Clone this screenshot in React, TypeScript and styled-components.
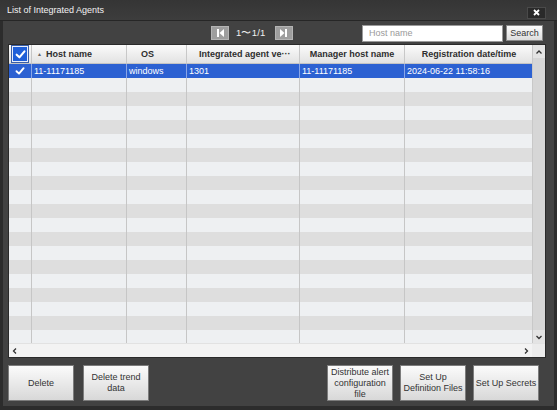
import React from "react";
import styled, { createGlobalStyle } from "styled-components";

const Global = createGlobalStyle`
  html, body { margin: 0; padding: 0; background: #2a2a2a; }
  * { box-sizing: border-box; }
  body { font-family: "Liberation Sans", Arial, sans-serif; }
`;

const Window = styled.div`
  width: 557px;
  height: 410px;
  background: #2c2c2c;
  display: flex;
  flex-direction: column;
  font-size: 9px;
`;

const TitleBar = styled.div`
  height: 21px;
  flex: none;
  display: flex;
  align-items: center;
  justify-content: space-between;
  padding: 0 11px 0 7px;
  background: linear-gradient(#353535, #3d3d3d);
  border-bottom: 1px solid #262626;
  color: #f2f2f2;
`;

const CloseBtn = styled.div`
  width: 19px;
  height: 12px;
  margin-top: 5px;
  background: #2a2a2a;
  border: 1px solid #4a4a4a;
  display: flex;
  align-items: center;
  justify-content: center;
`;

const Body = styled.div`
  flex: 1;
  margin: 0 3px 4px 3px;
  background: #424242;
  display: flex;
  flex-direction: column;
  padding: 0 8px 0 5px;
`;

const Toolbar = styled.div`
  height: 23px;
  flex: none;
  display: flex;
  align-items: center;
`;

const Pager = styled.div`
  display: flex;
  align-items: center;
  margin-left: 203px;
  margin-top: 1px;
  color: #f0f0f0;
`;

const PageBtn = styled.div`
  width: 18px;
  height: 14px;
  background: #9e9e9e;
  border: 1px solid #b4b4b4;
  display: flex;
  align-items: center;
  justify-content: center;
`;

const PageText = styled.span`
  margin: 0 9px 0 7px;
  font-size: 9.5px;
  letter-spacing: 0.2px;
`;

const Spacer = styled.div`
  flex: 1;
`;

const SearchInput = styled.div`
  width: 141px;
  height: 17px;
  margin-top: 1px;
  background: #fff;
  border: 1px solid #9a9a9a;
  color: #9a9a9a;
  padding-left: 6px;
  display: flex;
  align-items: center;
`;

const SmallBtn = styled.div`
  width: 37px;
  height: 16px;
  margin: 0 3px 0 3px;
  background: linear-gradient(#fdfdfd, #dcdcdc);
  border: 1px solid #8a8a8a;
  color: #333;
  display: flex;
  align-items: center;
  justify-content: center;
`;

const Table = styled.div`
  height: 314px;
  flex: none;
  border: 1px solid #2a2a2a;
  background: #f0f0f0;
  display: flex;
  flex-direction: column;
`;

const TableMain = styled.div`
  flex: 1;
  display: flex;
  overflow: hidden;
`;

const Grid = styled.div`
  flex: 1;
  display: flex;
  flex-direction: column;
  overflow: hidden;
`;

const HeaderRow = styled.div`
  height: 19px;
  flex: none;
  display: flex;
  background: linear-gradient(#fbfbfb, #e2e2e2);
  border-bottom: 1px solid #c4c4c4;
`;

const HeadCell = styled.div<{ $w: number; $align: string; $pad: number }>`
  width: ${(p) => p.$w}px;
  flex: none;
  display: flex;
  align-items: center;
  justify-content: ${(p) => p.$align};
  padding-left: ${(p) => p.$pad}px;
  padding-right: 2px;
  border-right: 1px solid #c8c8c8;
  font-weight: bold;
  color: #2e2e2e;
  white-space: nowrap;
  overflow: hidden;
`;

const SortMark = styled.span`
  font-size: 5px;
  color: #666;
  margin-right: 4px;
`;

const Row = styled.div<{ $bg: string }>`
  height: 14px;
  flex: none;
  display: flex;
  background: ${(p) => p.$bg};
`;

const Cell = styled.div<{ $w: number; $sel: boolean }>`
  width: ${(p) => p.$w}px;
  flex: none;
  display: flex;
  align-items: center;
  padding-left: 2px;
  border-right: 1px solid ${(p) => (p.$sel ? "#8aa6e6" : "#c6c6c6")};
  color: ${(p) => (p.$sel ? "#ffffff" : "#222")};
  white-space: nowrap;
  overflow: hidden;
`;

const CheckCell = styled.div<{ $w: number; $sel: boolean }>`
  width: ${(p) => p.$w}px;
  flex: none;
  display: flex;
  align-items: center;
  justify-content: center;
  border-right: 1px solid ${(p) => (p.$sel ? "#8aa6e6" : "#c6c6c6")};
`;

const HeadCheck = styled.div`
  width: 16px;
  height: 16px;
  background: #1f5fd8;
  border: 1px solid #e8eefc;
  outline: 1px solid #3a5fa8;
  display: flex;
  align-items: center;
  justify-content: center;
`;

const VScroll = styled.div`
  width: 13px;
  flex: none;
  display: flex;
  flex-direction: column;
  background: #d6d6d6;
  border-left: 1px solid #c8c8c8;
`;

const ArrowBox = styled.div`
  height: 13px;
  flex: none;
  display: flex;
  align-items: center;
  justify-content: center;
  background: #e4e4e4;
`;

const HScroll = styled.div`
  height: 14px;
  flex: none;
  display: flex;
  align-items: center;
  background: #f3f3f3;
  border-top: 1px solid #e2e2e2;
`;

const HArrow = styled.div`
  width: 12px;
  height: 13px;
  flex: none;
  display: flex;
  align-items: center;
  justify-content: center;
`;

const Corner = styled.div`
  width: 13px;
  height: 13px;
  flex: none;
  background: #ececec;
`;

const Footer = styled.div`
  flex: 1;
  display: flex;
  align-items: flex-start;
  padding-top: 7px;
  padding-right: 7px;
  gap: 9px;
`;

const ActionBtn = styled.div`
  width: 66px;
  height: 36px;
  flex: none;
  background: linear-gradient(#fbfbfb, #e6e6e6 60%, #d8d8d8);
  border: 1px solid #7c7c7c;
  color: #333;
  display: flex;
  align-items: center;
  justify-content: center;
  text-align: center;
  line-height: 11px;
  padding: 0;
  white-space: nowrap;
`;

const RightGroup = styled.div`
  margin-left: auto;
  display: flex;
  gap: 7px;
`;

const cols = [
  { w: 23 },
  { w: 95, label: "Host name", align: "flex-start", pad: 5, sort: true },
  { w: 60, label: "OS", align: "flex-start", pad: 14 },
  { w: 113, label: "Integrated agent ve\u00b7\u00b7\u00b7", align: "flex-start", pad: 12 },
  { w: 105, label: "Manager host name", align: "center", pad: 2 },
  { w: 129, label: "Registration date/time", align: "center", pad: 2 },
];

const dataRow = ["11-11171185", "windows", "1301", "11-11171185", "2024-06-22 11:58:16"];

const Check = ({ size = 10 }: { size?: number }) => (
  <svg width={size} height={size} viewBox="0 0 10 10">
    <path d="M1.5 5.2 L4 7.6 L8.6 2.2" fill="none" stroke="#fff" strokeWidth="1.9" strokeLinecap="round" strokeLinejoin="round" />
  </svg>
);

const FirstIcon = () => (
  <svg width="9" height="10" viewBox="0 0 9 10">
    <rect x="1" y="1" width="2" height="8" fill="#fff" />
    <path d="M8 1 L3.5 5 L8 9 Z" fill="#fff" />
  </svg>
);

const LastIcon = () => (
  <svg width="9" height="10" viewBox="0 0 9 10">
    <rect x="6" y="1" width="2" height="8" fill="#fff" />
    <path d="M1 1 L5.5 5 L1 9 Z" fill="#fff" />
  </svg>
);

const Chevron = ({ dir }: { dir: "up" | "down" | "left" | "right" }) => {
  const d = {
    up: "M1.5 5.5 L4 3 L6.5 5.5",
    down: "M1.5 3 L4 5.5 L6.5 3",
    left: "M5 1.5 L2.5 4 L5 6.5",
    right: "M3 1.5 L5.5 4 L3 6.5",
  }[dir];
  return (
    <svg width="8" height="8" viewBox="0 0 8 8">
      <path d={d} fill="none" stroke="#333" strokeWidth="1.3" />
    </svg>
  );
};

export default function App() {
  const rows = Array.from({ length: 20 }, (_, i) => i);
  return (
    <>
      <Global />
      <Window>
        <TitleBar>
          <span>List of Integrated Agents</span>
          <CloseBtn>
            <svg width="7" height="7" viewBox="0 0 7 7">
              <path d="M1 1 L6 6 M6 1 L1 6" stroke="#fff" strokeWidth="1.8" />
            </svg>
          </CloseBtn>
        </TitleBar>
        <Body>
          <Toolbar>
            <Pager>
              <PageBtn>
                <FirstIcon />
              </PageBtn>
              <PageText>1〜1/1</PageText>
              <PageBtn>
                <LastIcon />
              </PageBtn>
            </Pager>
            <Spacer />
            <SearchInput>Host name</SearchInput>
            <SmallBtn>Search</SmallBtn>
          </Toolbar>
          <Table>
            <TableMain>
              <Grid>
                <HeaderRow>
                  <CheckCell $w={cols[0].w} $sel={false}>
                    <HeadCheck>
                      <Check size={11} />
                    </HeadCheck>
                  </CheckCell>
                  {cols.slice(1).map((c) => (
                    <HeadCell key={c.label} $w={c.w} $align={c.align!} $pad={c.pad!}>
                      {c.sort && <SortMark>▲</SortMark>}
                      {c.label}
                    </HeadCell>
                  ))}
                </HeaderRow>
                {rows.map((i) => {
                  const sel = i === 0;
                  const bg = sel ? "#2c61d2" : i % 2 === 1 ? "#eef0f2" : "#dedede";
                  return (
                    <Row key={i} $bg={bg}>
                      <CheckCell $w={cols[0].w} $sel={sel}>
                        {sel && <Check size={10} />}
                      </CheckCell>
                      {cols.slice(1).map((c, j) => (
                        <Cell key={j} $w={c.w} $sel={sel}>
                          {sel ? dataRow[j] : ""}
                        </Cell>
                      ))}
                    </Row>
                  );
                })}
              </Grid>
              <VScroll>
                <ArrowBox>
                  <Chevron dir="up" />
                </ArrowBox>
                <Spacer />
                <ArrowBox>
                  <Chevron dir="down" />
                </ArrowBox>
              </VScroll>
            </TableMain>
            <HScroll>
              <HArrow>
                <Chevron dir="left" />
              </HArrow>
              <Spacer />
              <HArrow>
                <Chevron dir="right" />
              </HArrow>
              <Corner />
            </HScroll>
          </Table>
          <Footer>
            <ActionBtn>Delete</ActionBtn>
            <ActionBtn>
              Delete trend
              <br />
              data
            </ActionBtn>
            <RightGroup>
              <ActionBtn>
                Distribute alert
                <br />
                configuration
                <br />
                file
              </ActionBtn>
              <ActionBtn>
                Set Up
                <br />
                Definition Files
              </ActionBtn>
              <ActionBtn>Set Up Secrets</ActionBtn>
            </RightGroup>
          </Footer>
        </Body>
      </Window>
    </>
  );
}
